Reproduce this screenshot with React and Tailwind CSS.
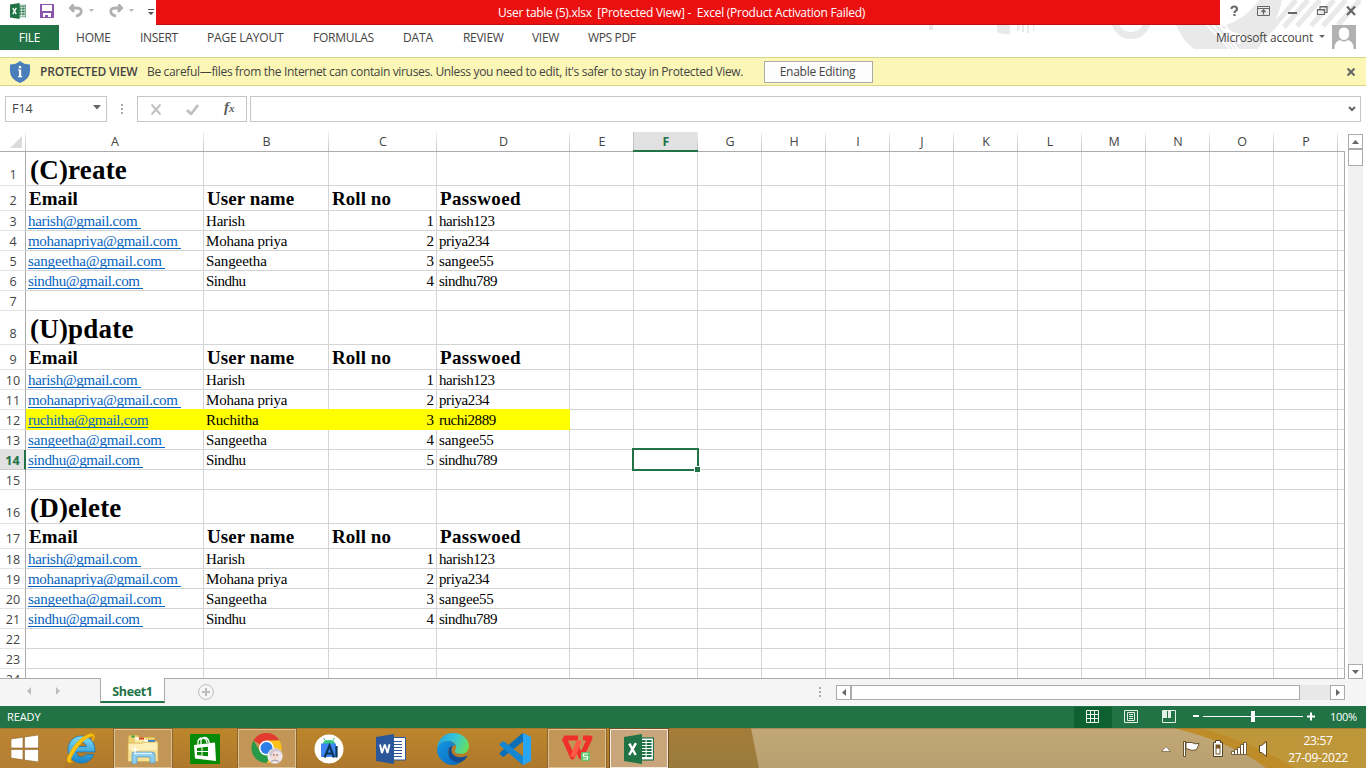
import React from "react";

const UI = "font-['Open_Sans','Noto_Sans',sans-serif]";
const SERIF = "font-['Liberation_Serif',serif]";

const columns = [
  ["A", "w-[178px]"], ["B", "w-[125px]"], ["C", "w-[108px]"], ["D", "w-[133px]"],
  ["E", "w-[64px]"], ["F", "w-[64px]"], ["G", "w-[64px]"], ["H", "w-[64px]"],
  ["I", "w-[64px]"], ["J", "w-[64px]"], ["K", "w-[64px]"], ["L", "w-[64px]"],
  ["M", "w-[64px]"], ["N", "w-[64px]"], ["O", "w-[64px]"], ["P", "w-[64px]"],
];

const title = (t) => ({ h: "h-[34px]", num: "pb-[2px]", kind: "title", cells: [t] });
const head = { h: "h-[25px]", num: "pb-px", kind: "head", cells: ["Email", "User name", "Roll no", "Passwoed"] };
const rec = (...cells) => ({ h: "h-5", num: "", kind: "rec", cells });
const blank = { h: "h-5", num: "", kind: "blank", cells: [] };

const rows = [
  title("(C)reate"), head,
  rec("harish@gmail.com ", "Harish", "1", "harish123"),
  rec("mohanapriya@gmail.com ", "Mohana priya", "2", "priya234"),
  rec("sangeetha@gmail.com ", "Sangeetha", "3", "sangee55"),
  rec("sindhu@gmail.com ", "Sindhu", "4", "sindhu789"),
  blank,
  title("(U)pdate"), head,
  rec("harish@gmail.com ", "Harish", "1", "harish123"),
  rec("mohanapriya@gmail.com ", "Mohana priya", "2", "priya234"),
  rec("ruchitha@gmail,com", "Ruchitha", "3", "ruchi2889"),
  rec("sangeetha@gmail.com ", "Sangeetha", "4", "sangee55"),
  rec("sindhu@gmail.com ", "Sindhu", "5", "sindhu789"),
  blank,
  title("(D)elete"), head,
  rec("harish@gmail.com ", "Harish", "1", "harish123"),
  rec("mohanapriya@gmail.com ", "Mohana priya", "2", "priya234"),
  rec("sangeetha@gmail.com ", "Sangeetha", "3", "sangee55"),
  rec("sindhu@gmail.com ", "Sindhu", "4", "sindhu789"),
  blank, blank, blank,
];

const spacing = {
  "sangeetha@gmail.com ": "tracking-[-0.15px]",
  "sindhu@gmail.com ": "tracking-[-0.37px]",
  "ruchitha@gmail,com": "tracking-[-0.36px]",
  "Sindhu": "tracking-[-0.5px]",
  "Sangeetha": "tracking-[-0.1px]",
  "harish123": "tracking-[-0.4px]",
  "priya234": "tracking-[-0.4px]",
  "sangee55": "tracking-[-0.15px]",
  "sindhu789": "tracking-[-0.5px]",
  "ruchi2889": "tracking-[-0.45px]",
};

function CellText({ row, col }) {
  const t = row.cells[col];
  if (!t) return null;
  if (row.kind === "title")
    return <span className="pl-1 text-[27px] leading-[37px] font-bold tracking-[0.2px]">{t}</span>;
  if (row.kind === "head")
    return (
      <span className={`pl-[3px] text-[19px] leading-[26px] font-bold ${col === 3 ? "tracking-[0.35px]" : "tracking-[0.05px]"}`}>
        {t}
      </span>
    );
  if (col === 0)
    return (
      <span className={`ml-[2px] h-[18px] border-b border-[#0563c1] text-[15px] leading-[21px] text-[#0563c1] ${spacing[t] || "tracking-[-0.3px]"}`}>
        {t}
      </span>
    );
  if (col === 2)
    return <span className="ml-auto pr-[2px] text-[15px] leading-[21px]">{t}</span>;
  return <span className={`pl-[2px] text-[15px] leading-[21px] ${spacing[t] || "tracking-[-0.2px]"}`}>{t}</span>;
}

function Row({ row, n }) {
  const active = n === 14;
  return (
    <div className={`flex shrink-0 ${row.h}`}>
      <div
        className={`${UI} ${row.num} flex w-[26px] shrink-0 items-end justify-center border-b pl-px text-[12.5px] leading-[17px] ${
          active
            ? "border-r-2 border-r-[#217346] border-b-[#c8c8c8] bg-[#e1e1e1] font-bold text-[#217346]"
            : "border-r border-r-[#ababab] border-b-[#e4e4e4] text-[#444]"
        }`}
      >
        {n}
      </div>
      {columns.map(([name, w], c) => {
        const fill = n === 12 && c < 4;
        const line = fill || (n === 11 && c < 4) ? "border-b-[#ff0]" : "border-b-[#d4d4d4]";
        const side = fill ? "border-r-[#ff0] bg-[#ff0]" : "border-r-[#d4d4d4]";
        return (
          <div
            key={name}
            className={`${w} ${line} ${side} flex shrink-0 items-start overflow-visible border-r border-b whitespace-pre text-black`}
          >
            <CellText row={row} col={c} />
          </div>
        );
      })}
      <div className="w-[7px] shrink-0 border-r border-b border-r-[#ababab] border-b-[#d4d4d4]" />
    </div>
  );
}

function ExcelMark({ className }) {
  return (
    <svg className={className} viewBox="0 0 30 30">
      <rect x="15" y="4" width="14.5" height="22" fill="#fff" stroke="#217346" strokeWidth="1.2" />
      <g fill="#217346">
        {[6, 9, 12, 15, 18, 21].map((y) => (
          <React.Fragment key={y}>
            <rect x="17" y={y} width="4.6" height="2" />
            <rect x="22.6" y={y} width="5" height="2" />
          </React.Fragment>
        ))}
      </g>
      <path d="M0 3 18 0v30L0 27z" fill="#217346" />
      <path d="m5.300 9.700 6.400 11.300M11.900 9.200 5.200 21" stroke="#fff" strokeWidth="2.500" />
    </svg>
  );
}

function HeaderArt() {
  return (
    <svg className="absolute top-0 left-[900px] h-[49px] w-[466px]" viewBox="0 0 466 49" fill="none">
      <g fill="#e9e9e9">
        <path d="M29 24h4v6h-4zM97 24h13v10q-7 1-13-2zM117 24h2.500v7h-2.500zM122 24h2v8h-2zM127 24h2v9h-2zM133 24h1.500v7h-1.500z" />
      </g>
      <circle cx="231" cy="19" r="16.500" stroke="#e9e9e9" strokeWidth="7" />
      <path d="M276 25h42l28 24h-52q-12-9-18-24z" fill="#e9e9e9" />
      <path d="M320 27q24-6 39-27h23q-6 30-30 49h-22q12-6 15-13z" fill="#e9e9e9" />
      <path d="M306 24l24 25M312 24l22 25M318 24l20 25M324 24l16 20" stroke="#fff" strokeWidth="1.800" />
      <path d="M396 0 354 49M408 0 384 27M420 0 397 26M434 0 411 26M446 0 423 26M460 0 438 25" stroke="#e9e9e9" strokeWidth="5" />
    </svg>
  );
}

function TitleBar() {
  return (
    <div className="flex h-[25px] shrink-0">
      <div className="flex w-[156px] shrink-0 items-start">
        <ExcelMark className="mt-[3px] ml-[10px] h-4 w-4" />
        <svg className="mt-1 ml-[14px] h-[14px] w-[14px]" viewBox="0 0 14 14">
          <path d="M0 0h14v14H0z" fill="#8a56ac" />
          <path d="M2 1h10v6H2zM3 9h8v4H8v-2H5v2H3z" fill="#fff" />
        </svg>
        <svg className="mt-1 ml-[14px] h-[14px] w-[28px]" viewBox="0 0 28 14" fill="none">
          <path d="M5.500 .5 2.300 4 6 7.800M2.500 4H9c6 0 5.500 7-1 8" stroke="#b0b0b0" strokeWidth="2.800" />
          <path d="M21 5h5l-2.500 3z" fill="#b8b8b8" />
        </svg>
        <svg className="mt-1 ml-3 h-[14px] w-[28px]" viewBox="0 0 28 14" fill="none">
          <path d="M10.500 .5 13.700 4 10 7.800M13.500 4H7C1 4 1.500 11 8 12" stroke="#b0b0b0" strokeWidth="2.800" />
          <path d="M21 5h5l-2.500 3z" fill="#b8b8b8" />
        </svg>
        <svg className="mt-[9px] ml-[12px] h-[7px] w-[6px]" viewBox="0 0 6 7">
          <path d="M0 0h6v1H0zM0 3h6L3 6z" fill="#555" />
        </svg>
      </div>
      <div className="flex w-[1064px] shrink-0 border-b border-[#c00d0d] bg-[#ea1010] pl-[342px] text-[12px] leading-[26px] tracking-[-0.27px] whitespace-pre text-white">
        <span>{"User table (5).xlsx  [Protected View] -  Excel (Product Activation Failed)"}</span>
      </div>
      <svg className="h-[25px] w-[146px]" viewBox="0 0 146 25" fill="none" stroke="#666">
        <path d="M11.500 9q0-2.500 2.700-2.500T17 9q0 1.300-1.500 2.200-1 .7-1 1.800M14.500 14v2" strokeWidth="2.100" />
        <path d="M37.500 6.500h12v9h-12zM37.500 8.500h12" strokeWidth="1" />
        <path d="M43.500 14.500v-4M41.500 12l2-2 2 2" strokeWidth="1.300" />
        <path d="M68 13h9" strokeWidth="2" />
        <path d="M100 9V6.500h7v6h-2M97.500 9.500h7v5h-7zM97 10h8M99.500 7h8" strokeWidth="1.200" />
        <path d="m127 6.500 8 8.500m0-8.500-8 8.500" strokeWidth="2.200" />
      </svg>
    </div>
  );
}

const tabs = [
  ["HOME", "w-[64px] tracking-[-0.2px]"],
  ["INSERT", "w-[67px] tracking-[-0.3px]"],
  ["PAGE LAYOUT", "w-[106px] tracking-[-0.2px]"],
  ["FORMULAS", "w-[90px] tracking-[-0.25px]"],
  ["DATA", "w-[60px] tracking-[-0.1px]"],
  ["REVIEW", "w-[69px] tracking-[-0.3px]"],
  ["VIEW", "w-[56px] tracking-[-0.3px]"],
  ["WPS PDF", "w-[80px] tracking-[-0.35px]"],
];

function RibbonTabs() {
  return (
    <div className="flex h-8 shrink-0 text-[12px] leading-[25px] whitespace-nowrap text-[#444]">
      <div className="h-[25px] w-[59px] bg-[#217346] text-center tracking-[-0.2px] text-white">FILE</div>
      <div className="flex pl-[17px]">
        {tabs.map(([t, c]) => <div key={t} className={c}>{t}</div>)}
      </div>
      <div className="ml-auto flex">
        <span className="leading-[25px] tracking-[-0.2px]">Microsoft account</span>
        <svg className="mt-[10px] ml-[6px] h-[4px] w-[6px]" viewBox="0 0 6 4"><path d="M0 0h6L3 3z" fill="#666" /></svg>
        <svg className="mr-[10px] ml-[7px] h-6 w-6" viewBox="0 0 24 24">
          <path d="M0 0h24v24H0z" fill="#b1b1b1" />
          <path d="M12 2.500c4 0 5.500 3 5.200 6.500-.2 3-2 6-5.200 6s-5-3-5.200-6C6.500 5.500 8 2.500 12 2.500zM2.500 24c0-6 2-8 6-9 2 2 5 2 7 0 4 1 6 3 6 9z" fill="#fff" />
        </svg>
      </div>
    </div>
  );
}

function ProtectedBar() {
  return (
    <div className="flex h-[29px] shrink-0 items-center border-y border-[#d9d48a] bg-[#fcf7b6] text-[12px] whitespace-nowrap text-[#444]">
      <svg className="ml-[10px] h-[22px] w-5" viewBox="0 0 20 22">
        <path d="M10 0q4 3.500 10 3.500V10q0 8-10 12Q0 18 0 10V3.500Q6 3.500 10 0z" fill="#4a7ebb" />
        <path d="M8.800 5h2.400v2.200H8.800zM8 8.500h3.200V15h1v1.300H8V15h1V9.800H8z" fill="#fff" />
      </svg>
      <span className="ml-[10px] w-[107px] font-semibold tracking-[-0.2px]">PROTECTED VIEW</span>
      <span className="w-[617px] tracking-[-0.335px]">
        Be careful—files from the Internet can contain viruses. Unless you need to edit, it's safer to stay in Protected View.
      </span>
      <div className="h-[22px] w-[109px] border border-[#ababab] bg-[#fdfdfd] pr-[2px] text-center leading-[20px] tracking-[-0.25px]">Enable Editing</div>
      <svg className="mr-[11px] ml-auto h-2 w-2" viewBox="0 0 8 8"><path d="m.5.5 7 7m0-7-7 7" stroke="#666" strokeWidth="2.200" /></svg>
    </div>
  );
}

function FormulaBar() {
  return (
    <div className="flex h-[46px] shrink-0 items-start pt-[10px]">
      <div className="ml-[5px] flex h-[26px] w-[102px] items-center justify-between border border-[#c6c6c6] pt-px pr-[5px] pl-[6px] text-[12.500px] text-[#444]">
        F14
        <svg className="mb-1 h-[5px] w-[8px]" viewBox="0 0 8 5"><path d="M0 0h8L4 4.500z" fill="#666" /></svg>
      </div>
      <svg className="mt-2 ml-[14px] h-[10px] w-[2px]" viewBox="0 0 2 10"><path d="M0 0h2v2H0zM0 4h2v2H0zM0 8h2v2H0z" fill="#ababab" /></svg>
      <div className="ml-[14px] flex h-[26px] w-[110px] items-center border border-[#c6c6c6]">
        <svg className="ml-[13px] h-[11px] w-[10px]" viewBox="0 0 10 11"><path d="m.5.5 9 10m0-10-9 10" stroke="#c0c0c0" strokeWidth="2" /></svg>
        <svg className="ml-[25px] h-[11px] w-[13px]" viewBox="0 0 13 11" fill="none"><path d="m1 6 4 4L12 1" stroke="#c0c0c0" strokeWidth="2.800" /></svg>
        <span className={`${SERIF} ml-[25px] pb-[3px] text-[15px] leading-none font-bold text-[#5c5c5c] italic`}>f<span className="text-[11px]">x</span></span>
      </div>
      <div className="ml-[3px] flex h-[26px] w-[1111px] items-center justify-end border border-[#c6c6c6]">
        <svg className="mr-1 h-[6px] w-[8px]" viewBox="0 0 8 6" fill="none"><path d="m1 1 3 3 3-3" stroke="#666" strokeWidth="2" /></svg>
      </div>
    </div>
  );
}

const edge = "bg-linear-to-b from-[#f0f0f0] to-[#c4c4c4]";

function ColumnHeads() {
  return (
    <div className="flex h-5 shrink-0 text-[12.500px] leading-[20px] text-[#444]">
      <div className="flex w-[26px] shrink-0 border-b border-[#ababab]">
        <svg className="mt-1 ml-[10px] h-3 w-3" viewBox="0 0 12 12"><path d="M12 0v12H0z" fill="#dcdcdc" /></svg>
        <div className={`ml-auto w-px ${edge}`} />
      </div>
      {columns.map(([n, w]) => (
        <div
          key={n}
          className={`flex shrink-0 ${n === "F" ? "-ml-px w-[65px] border-b-2 border-[#217346] bg-[#e1e1e1] font-bold text-[#217346]" : `${w} border-b border-[#ababab]`}`}
        >
          {n === "F" && <div className="w-px bg-[#c4c4c4]" />}
          <span className="flex-1 pl-px text-center">{n}</span>
          <div className={`w-px ${edge}`} />
        </div>
      ))}
      <div className="w-[7px] shrink-0 border-b border-[#ababab]" />
    </div>
  );
}

function Sheet() {
  return (
    <div className="flex h-[547px] shrink-0">
      <div className="flex w-[1345px] shrink-0 flex-col">
        <ColumnHeads />
        <div className={`relative flex h-[526px] flex-col overflow-hidden ${SERIF}`}>
          {rows.map((r, i) => <Row key={i} row={r} n={i + 1} />)}
          <div className="absolute top-[296px] left-[632px] h-[23px] w-[67px] border-2 border-[#217346]">
            <div className="absolute -right-1 -bottom-1 h-[7px] w-[7px] border border-white bg-[#217346]" />
          </div>
        </div>
        <div className="h-px bg-[#ababab]" />
      </div>
      <div className="flex w-[21px] flex-col items-start pt-[2px] pl-[3px]">
        <div className="flex h-[15px] w-[15px] shrink-0 items-center justify-center border border-[#ababab] bg-white">
          <svg className="h-1 w-[7px]" viewBox="0 0 7 4"><path d="M0 4h7L3.500 0z" fill="#666" /></svg>
        </div>
        <div className="h-[17px] w-[15px] shrink-0 border border-[#ababab] bg-white" />
        <div className="w-[15px] flex-1 bg-[#f1f1f1]" />
        <div className="flex h-[15px] w-[15px] shrink-0 items-center justify-center border border-[#ababab] bg-white">
          <svg className="h-1 w-[7px]" viewBox="0 0 7 4"><path d="M0 0h7L3.500 4z" fill="#666" /></svg>
        </div>
      </div>
    </div>
  );
}

function SheetTabs() {
  return (
    <div className="flex h-[27px] shrink-0 items-start bg-[#f5f5f5]">
      <svg className="mt-2 ml-[26px] h-2 w-[35px]" viewBox="0 0 35 8"><path d="M5 0v8L1 4zM30 0v8l4-4z" fill="#bdbdbd" /></svg>
      <div className="-mt-px ml-[39px] h-[25px] w-[65px] border-x border-b-2 border-x-[#ababab] border-b-[#217346] bg-white text-center text-[12.500px] leading-[27px] font-bold tracking-[-0.35px] text-[#217346]">
        Sheet1
      </div>
      <svg className="mt-[5px] ml-[33px] h-4 w-4" viewBox="0 0 16 16" fill="none">
        <circle cx="8" cy="8" r="7.400" stroke="#bdbdbd" />
        <path d="M8 4v8M4 8h8" stroke="#bdbdbd" strokeWidth="2" />
      </svg>
      <svg className="mt-2 ml-[605px] h-[10px] w-[2px]" viewBox="0 0 2 10"><path d="M0 0h2v2H0zM0 4h2v2H0zM0 8h2v2H0z" fill="#ababab" /></svg>
      <div className="mt-[6px] ml-[15px] flex h-[15px] w-[509px] bg-[#e8e8e8]">
        <div className="flex w-[15px] items-center justify-center border border-[#ababab] bg-white">
          <svg className="h-[7px] w-1" viewBox="0 0 4 7"><path d="M4 0v7L0 3.500z" fill="#666" /></svg>
        </div>
        <div className="w-[449px] border border-[#ababab] bg-white" />
        <div className="ml-auto flex w-[15px] items-center justify-center border border-[#ababab] bg-white">
          <svg className="h-[7px] w-1" viewBox="0 0 4 7"><path d="M0 0v7l4-3.500z" fill="#666" /></svg>
        </div>
      </div>
    </div>
  );
}

function StatusBar() {
  return (
    <div className="flex h-[22px] shrink-0 items-center bg-[#217346] pl-[7px] text-[11px] leading-[22px] text-white">
      <span className="tracking-[-0.1px]">READY</span>
      <div className="ml-auto flex h-[21px] w-[38px] items-center justify-center self-end bg-[#0e6131] pr-px">
        <svg className="mb-[2px] h-[13px] w-[13px]" viewBox="0 0 13 13" fill="none" stroke="#f0f7f2"><path d="M.5.5h12v12H.5zM4.500 0v13M8.500 0v13M0 4.500h13M0 8.500h13" /></svg>
      </div>
      <svg className="mb-[2px] ml-3 h-[13px] w-[14px]" viewBox="0 0 14 13" fill="none" stroke="#e4efe8"><path d="M.5.5h13v12H.5zM3.500 2.500h7v8h-7zM5 4.500h4M5 6.500h4M5 8.500h4" /></svg>
      <svg className="mb-[2px] ml-6 h-[13px] w-[14px]" viewBox="0 0 14 13" fill="none"><path d="M.5.500h13v12H.5z" stroke="#e4efe8" /><path d="M1 1h4v7H1zM6 1h3v7H6z" fill="#e4efe8" /></svg>
      <svg className="mb-[2px] ml-[17px] h-3 w-[122px]" viewBox="0 0 122 12" fill="#fff"><path d="M0 5h6v2H0zM10 6h100v1H10zM58 1h4v11h-4zM114 5.500h8v2h-8zM117 2.500h2v8h-2z" /></svg>
      <span className="w-[51px] pl-[15px] tracking-[-0.3px]">100%</span>
    </div>
  );
}

const WinLogo = () => (
  <svg className="h-[27px] w-[28px]" viewBox="0 0 28 27"><path d="M0 4 12 2.200V13H0zM13.500 2 27.500 0v13h-14zM0 14.500h12v10.300L0 23zM13.500 14.500h14V27l-14-2z" fill="#fff" stroke="#8b672c" strokeWidth=".6" /></svg>
);

const IE = () => (
  <svg className="h-[32px] w-[32px]" viewBox="0 0 32 32" fill="none">
    <defs><linearGradient id="ieBlue" x1="0" y1="0" x2="0" y2="1"><stop stopColor="#7fdcf8" /><stop offset="1" stopColor="#1683c6" /></linearGradient></defs>
    <path d="M16.500 3C8.500 3 3 9 3 16.500S8.500 30 16.500 30c5.500 0 10-3 12-8.500h-7.500c-1 1.600-2.500 2.400-4.500 2.400-3 0-5-2-5.200-5H30C30.500 9.500 25 3 16.500 3zm-5 10.500c.5-2.600 2.400-4.200 5-4.200s4.600 1.600 4.900 4.200z" fill="url(#ieBlue)" stroke="#1879b4" strokeWidth=".8" />
    <path d="M5 20C1 27 2 31 7.500 28.500c-2.500.5-3-1.500-.5-6C11 14 19 5.500 26 3c2.500-.8 3 1.500 1.500 5 3-5 1.500-8.500-4-6.500C16 4.500 9 12.500 5 20z" fill="#ffc91c" stroke="#f0b400" strokeWidth="1.300" />
  </svg>
);

const Folder = () => (
  <svg className="h-[30px] w-[32px]" viewBox="0 0 32 30">
    <path d="M1 4q0-3 2-3h8l1 2h16v24H1z" fill="#edcf70" stroke="#c29b3e" strokeWidth=".7" />
    <path d="M8 4h11l1 3h10v6H8z" fill="#fae9a5" />
    <path d="M4.500 1.500h3v2h-3z" fill="#24a148" /><path d="M12 3.500h5v2h-5z" fill="#d8402a" /><path d="M21 6h7v2h-7z" fill="#2c7fd0" />
    <path d="M8 3.500h4v2H8zM17 6h4v2h-4z" fill="#fff" />
    <path d="M1 9h14l2-1h14v19.500H1z" fill="#f7e195" stroke="#d0ac50" strokeWidth=".6" />
    <path d="M2 10h14l2-1h12v7H2z" fill="#fcf0b8" />
    <path d="M5 30V20q0-2 2-2h18q3 0 3 3v8h-5v-6H10v7z" fill="#8ecdea" stroke="#5a9cc4" strokeWidth=".8" />
    <path d="M7 19.500h18" stroke="#d7f1fc" strokeWidth="1.500" />
    <path d="m8 11 .8 4.200L13 16l-4.200.8L8 21l-.8-4.200L3 16l4.200-.8z" fill="#fff" />
  </svg>
);

const Store = () => (
  <svg className="h-[30px] w-[30px]" viewBox="0 0 30 30" fill="none">
    <path d="M0 0h30v30H0z" fill="#078a07" />
    <path d="M4 11 25 8.500 26 27 5 24.500z" fill="#fff" />
    <path d="M8 11V7q1-3 5-3 3.500 0 4 5M11 11V6q1-2.500 4-2.500t4.500 6" stroke="#fff" strokeWidth="1.300" />
    <path d="m7 14 4.500-.5V17H7zM12.500 13.300l5.500-.6V17h-5.500zM7 18h4.500v3.600L7 21zM12.500 18H18v4.300l-5.500-.6z" fill="#078a07" />
  </svg>
);

const Chrome = () => (
  <svg className="h-[31px] w-[32px]" viewBox="0 0 32 31">
    <path d="M15.500 15 2.500 7.500A15 15 0 0 1 28.500 7.500L15.500 8z" fill="#e33b2e" />
    <path d="M15.500 7.500h13A15 15 0 0 1 15.500 30l6.500-11z" fill="#fbc116" />
    <path d="M2.500 7.500A15 15 0 0 0 15.500 30l6.500-11-13-.5z" fill="#269a46" />
    <circle cx="15.500" cy="15" r="7.500" fill="#fff" /><circle cx="15.500" cy="15" r="6" fill="#2e7de9" />
    <circle cx="24" cy="23" r="7.700" fill="#eee7e8" />
    <path d="M18 20q3-5 7-4.500 5 .5 6 6-3-4-5-3-2-1-4 1l-2 5z" fill="#cfc5ce" />
    <path d="M21 21q3-3 6 0v4q-3 4-6 0z" fill="#f6d9cf" />
    <path d="M22 22h1.500M25.500 22H27" stroke="#554253" /><path d="M20 28.500q4-3 8 0" stroke="#a08d9a" fill="none" />
  </svg>
);

const AndroidStudio = () => (
  <svg className="h-[30px] w-[30px]" viewBox="0 0 30 30" fill="none">
    <circle cx="15" cy="15" r="14.500" fill="#fff" />
    <path d="M9 10q0-4 6-4t6 4z" fill="#35c982" /><path d="m9.500 4 2 3M20.500 4l-2 3" stroke="#35c982" />
    <path d="M7 9.500h15V23H7z" fill="#4285f4" />
    <path d="m10.500 23.500 5-12 4.500 12M12.500 19.500h6" stroke="#0a3558" strokeWidth="2.200" />
    <path d="M22.500 12v11.500" stroke="#0a3558" strokeWidth="2.200" />
  </svg>
);

const Word = () => (
  <svg className="h-[30px] w-[30px]" viewBox="0 0 30 30">
    <path d="M15 3.500h14.500v22.500H15z" fill="#fff" stroke="#2b579a" />
    <path d="M18 7.500h8M18 10.500h8M18 13.500h8M18 16.500h8M18 19.500h8M18 22.500h8" stroke="#2b579a" strokeWidth="1.200" />
    <path d="M0 3 18 0v30L0 27z" fill="#2b579a" />
    <path d="m4 10.500 2 8.500 2.800-8.500 2.700 8.500 2-8.800" stroke="#fff" strokeWidth="1.900" strokeLinejoin="bevel" fill="none" />
  </svg>
);

const Edge = () => (
  <svg className="h-[32px] w-[32px]" viewBox="0 0 32 32">
    <defs>
      <linearGradient id="edgeTop" x1="0" y1=".3" x2="1" y2=".6"><stop stopColor="#1fa5e0" /><stop offset=".5" stopColor="#36c5d8" /><stop offset="1" stopColor="#69e05a" /></linearGradient>
      <linearGradient id="edgeLow" x1="0" y1="0" x2="1" y2="1"><stop stopColor="#1598e4" /><stop offset="1" stopColor="#0867bb" /></linearGradient>
    </defs>
    <path d="M0 15C1 6 8 0 16 0c9 0 16 6 16 13 0 5-4 8-8 8-4.500 0-6.500-1.800-6-3.200 2.500-3.300 1-9.300-5-9.800C7 7.500 2 10 0 15z" fill="url(#edgeTop)" />
    <path d="M0 16c1-5 6-8.500 12-8 4 .4 6 3 6.500 5C12 11 9 18 13 24c3 4.500 9 6.500 12 4.500C22 31 19 32 16 32 7 32 0 25 0 16z" fill="url(#edgeLow)" />
    <path d="M12 15c-3 9 4 17 13 13.500 2-1 4-3 5-5 .4-.8-.3-1-1-.6-7 3.300-15 .1-14.500-6.400.2-1.700 1-2.500 1.500-3.500-2 0-3 .7-4 2z" fill="#134d93" />
  </svg>
);

const VSCode = () => (
  <svg className="h-[32px] w-[32px]" viewBox="0 0 32 32">
    <path d="M24 0 32 4v24l-8 4z" fill="#29a6f3" />
    <path d="M24 0v8.500L4.500 24 1 21.500q-1-1 0-2L23 .5z" fill="#0b6fb8" />
    <path d="M24 32v-8.500L4.500 8 1 10.500q-1 1 0 2L23 31.500z" fill="#1587d2" />
  </svg>
);

const WPS = () => (
  <svg className="h-[27px] w-[32px]" viewBox="0 0 32 27" fill="none">
    <path d="M2.500 3H17M3 3l8.500 19 3-7M16 13l4 9L29 3h-7" stroke="#ef2f2a" strokeWidth="5" strokeLinejoin="round" />
    <path d="m11.500 22 7-16.500" stroke="#ff5947" strokeWidth="5" />
    <rect x="20" y="17" width="9" height="9" rx="1.500" fill="#5fc66b" />
    <path d="M27 19h-4.500v2.500h4V24H22" stroke="#fff" strokeWidth="1.200" />
  </svg>
);

const ExcelBig = () => <ExcelMark className="h-[30px] w-[30px]" />;

const apps = [
  [IE, ""], [Folder, "open"], [Store, ""], [Chrome, "open"], [AndroidStudio, ""],
  [Word, ""], [Edge, ""], [VSCode, ""], [WPS, "open"], [ExcelBig, "active"],
];

function Taskbar() {
  return (
    <div className="relative flex h-10 shrink-0 overflow-hidden">
      <svg className="absolute inset-0 h-10 w-[1366px]" viewBox="0 0 1366 40">
        <defs>
          <linearGradient id="deskBrown" x1="0" y1="0" x2="0" y2="1"><stop stopColor="#bd862b" /><stop offset="1" stopColor="#ad782c" /></linearGradient>
          <linearGradient id="deskSand" x1="0" y1="0" x2="0" y2="1"><stop stopColor="#c2a876" /><stop offset="1" stopColor="#b9a071" /></linearGradient>
          <linearGradient id="deskOlive" x1="0" y1="0" x2="0" y2="1"><stop stopColor="#a67c38" /><stop offset="1" stopColor="#987b3d" /></linearGradient>
        </defs>
        <path d="M0 0h1366v40H0z" fill="url(#deskBrown)" />
        <path d="M0 0h76L64 40H0z" fill="#b98339" opacity=".6" />
        <path d="M668 0h84l8 40h-92z" fill="url(#deskOlive)" />
        <path d="M751 0h615v40H759z" fill="url(#deskSand)" />
        <path d="M1174 0h192v40h-100q-30-24-92-40z" fill="#be8c28" />
        <path d="M1200 0h166v40h-72q-36-24-94-40z" fill="#bf973b" />
        <path d="M0 .5h1366" stroke="#8a6a35" opacity=".45" />
      </svg>
      <div className="relative flex flex-1">
        <div className="flex w-[50px] items-center pl-[11px]"><WinLogo /></div>
        {apps.map(([Icon, state], i) => (
          <div key={i} className="flex w-[62px] items-center justify-center">
            <div
              className={`mt-px flex h-[39px] w-[58px] items-center justify-center border ${
                state === "active"
                  ? "border-[#f4ece0] bg-[#c8a57a] outline outline-[#74501f]"
                  : state === "open"
                    ? "border-[#dcc194] bg-[#c29656] outline outline-[#8d642a]"
                    : "border-transparent"
              }`}
            >
              <Icon />
            </div>
          </div>
        ))}
        <svg className="ml-[491px] h-10 w-[110px]" viewBox="0 0 110 40" fill="none">
          <path d="m.5 23.500 4.500-5 4.500 5z" fill="#fff" stroke="#6d5c33" strokeWidth=".7" />
          <path d="M22.500 13.500h2v15h-2zM25 14.500h6q2 2 7 1-1 4-3 6.500-5 1-8-1h-2z" fill="#fff" stroke="#554625" strokeWidth=".9" />
          <path d="M52.500 14.500h2v-2h5v2h2v14h-9z" fill="#fff" stroke="#4c3d1e" />
          <path d="M54.500 16.500h5v10h-5z" fill="#77541e" /><path d="M55.500 20.500h3v5h-3z" fill="#fff" />
          <path d="M70.500 23.500h3v3h-3zM73.500 21.500h3v5h-3zM76.500 19.500h3v7h-3zM79.500 16.500h3v10h-3zM82.500 14.500h3v12h-3z" fill="#fff" stroke="#5b471f" strokeWidth=".8" />
          <path d="M98.500 17.500h2l5-4v15l-5-4h-2z" fill="#fff" stroke="#5b471f" />
        </svg>
        <div className="flex w-[94px] flex-col items-center pt-[4px] text-[12px] leading-[17px] tracking-[-0.3px] text-white">
          <span>23:57</span>
          <span>27-09-2022</span>
        </div>
      </div>
    </div>
  );
}

export default function App() {
  return (
    <div className={`relative flex h-[768px] w-[1366px] flex-col overflow-hidden bg-white ${UI}`}>
      <HeaderArt />
      <div className="relative flex flex-1 flex-col">
        <TitleBar />
        <RibbonTabs />
        <ProtectedBar />
        <FormulaBar />
        <Sheet />
        <SheetTabs />
        <StatusBar />
        <Taskbar />
      </div>
    </div>
  );
}
